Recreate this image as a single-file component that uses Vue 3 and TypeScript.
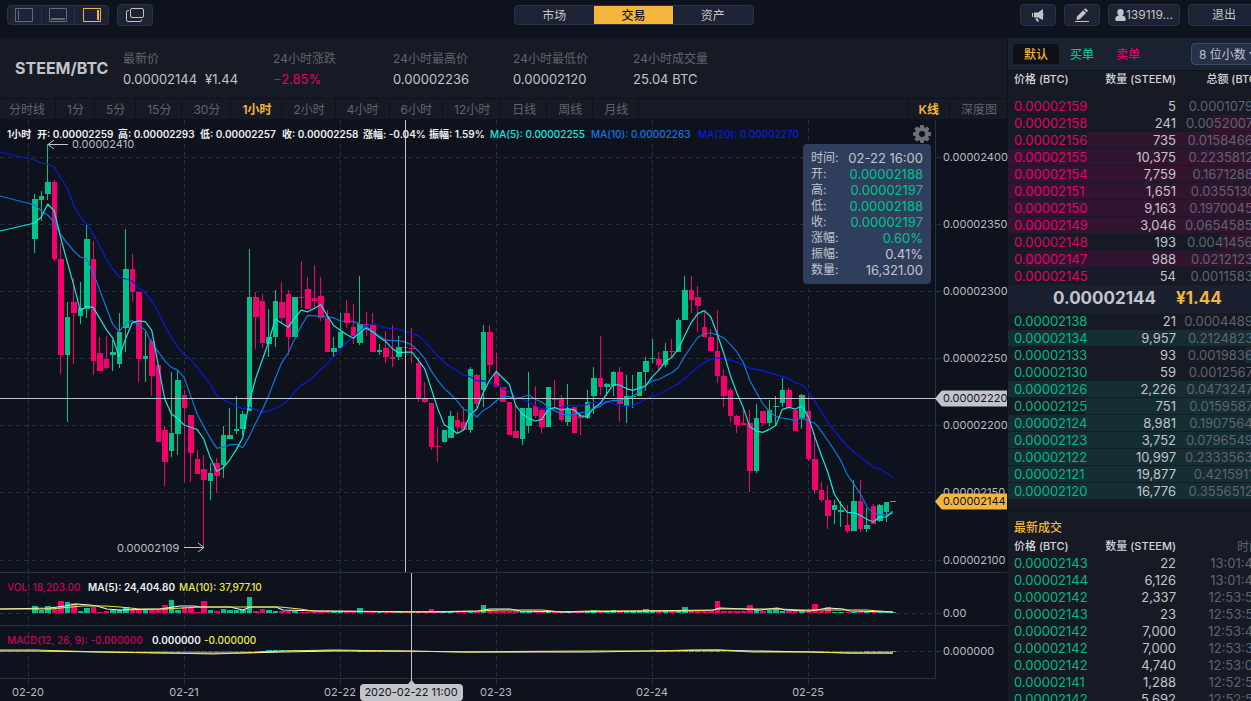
<script setup lang="ts">
import { ref } from 'vue'

type Candle = [dir: 'g' | 'r', high: number, top: number, bottom: number, low: number]
type Point = [number, number]

const navItems = ['市场', '交易', '资产']
const activeNav = ref('交易')

const periods = ['分时线', '1分', '5分', '15分', '30分', '1小时', '2小时', '4小时', '6小时', '12小时', '日线', '周线', '月线']
const activePeriod = ref('1小时')
const views = ['K线', '深度图']
const activeView = ref('K线')

const stats = [
  { label: '24小时涨跌', value: '−2.85%', down: true },
  { label: '24小时最高价', value: '0.00002236', down: false },
  { label: '24小时最低价', value: '0.00002120', down: false },
  { label: '24小时成交量', value: '25.04 BTC', down: false },
]

const sells = [
  ['0.00002159', '5', '0.00010795'],
  ['0.00002158', '241', '0.00520078'],
  ['0.00002156', '735', '0.01584660'],
  ['0.00002155', '10,375', '0.22358125'],
  ['0.00002154', '7,759', '0.16712886'],
  ['0.00002151', '1,651', '0.03551301'],
  ['0.00002150', '9,163', '0.19700450'],
  ['0.00002149', '3,046', '0.06545854'],
  ['0.00002148', '193', '0.00414564'],
  ['0.00002147', '988', '0.02121236'],
  ['0.00002145', '54', '0.00115830'],
]
const buys = [
  ['0.00002138', '21', '0.00044898'],
  ['0.00002134', '9,957', '0.21248238'],
  ['0.00002133', '93', '0.00198369'],
  ['0.00002130', '59', '0.00125670'],
  ['0.00002126', '2,226', '0.04732476'],
  ['0.00002125', '751', '0.01595875'],
  ['0.00002124', '8,981', '0.19075644'],
  ['0.00002123', '3,752', '0.07965496'],
  ['0.00002122', '10,997', '0.23335634'],
  ['0.00002121', '19,877', '0.42159117'],
  ['0.00002120', '16,776', '0.35565120'],
]
const trades = [
  ['0.00002143', '22', '13:01:48'],
  ['0.00002144', '6,126', '13:01:46'],
  ['0.00002142', '2,337', '12:53:58'],
  ['0.00002143', '23', '12:53:52'],
  ['0.00002142', '7,000', '12:53:45'],
  ['0.00002142', '7,000', '12:53:35'],
  ['0.00002142', '4,740', '12:53:02'],
  ['0.00002141', '1,288', '12:52:58'],
  ['0.00002142', '5,692', '12:52:56'],
]
const depth = (total: string) => ({ '--depth': Math.min(100, Number(total) * 4400) + '%' })

const tip = [
  ['时间:', '02-22 16:00', ''],
  ['开:', '0.00002188', 'up'],
  ['高:', '0.00002197', 'up'],
  ['低:', '0.00002188', 'up'],
  ['收:', '0.00002197', 'up'],
  ['涨幅:', '0.60%', 'up'],
  ['振幅:', '0.41%', ''],
  ['数量:', '16,321.00', ''],
]

const candles: Candle[] = [
  ['g', 194, 199, 239, 253], ['g', 191, 196, 200, 221], ['g', 144, 182, 194, 200], ['r', 180, 182, 259, 261],
  ['r', 243, 259, 355, 374], ['g', 302, 317, 355, 422], ['r', 278, 302, 313, 364], ['g', 282, 308, 316, 324],
  ['g', 225, 239, 309, 318], ['r', 241, 259, 361, 375], ['r', 337, 353, 371, 371], ['r', 336, 359, 368, 369],
  ['g', 340, 352, 355, 371], ['g', 313, 332, 364, 368], ['g', 229, 269, 328, 352], ['r', 254, 269, 292, 302],
  ['r', 292, 292, 359, 382], ['g', 330, 356, 359, 382], ['r', 339, 341, 376, 396], ['r', 365, 365, 442, 442],
  ['r', 426, 430, 462, 486], ['g', 372, 433, 451, 457], ['g', 371, 380, 434, 455], ['r', 390, 395, 408, 482],
  ['r', 415, 415, 453, 482], ['r', 450, 459, 474, 474], ['r', 455, 469, 480, 547], ['g', 463, 473, 481, 500],
  ['r', 458, 463, 476, 493], ['g', 426, 435, 465, 478], ['g', 408, 435, 439, 439], ['g', 396, 429, 431, 434],
  ['g', 411, 414, 429, 435], ['g', 249, 297, 411, 411], ['r', 292, 297, 317, 349], ['r', 294, 301, 343, 348],
  ['g', 309, 337, 344, 357], ['g', 290, 301, 337, 347], ['r', 282, 302, 318, 323], ['r', 290, 294, 337, 355],
  ['g', 297, 297, 337, 337], ['r', 261, 297, 298, 308], ['r', 277, 289, 309, 309], ['r', 265, 298, 301, 307],
  ['r', 277, 296, 318, 321], ['r', 310, 318, 352, 352], ['g', 337, 348, 352, 357], ['g', 313, 332, 348, 348],
  ['r', 300, 313, 323, 328], ['r', 304, 327, 336, 344], ['g', 276, 324, 343, 345], ['r', 312, 324, 325, 336],
  ['r', 313, 325, 352, 352], ['g', 344, 350, 352, 355], ['r', 331, 348, 357, 363], ['r', 325, 357, 359, 367],
  ['g', 336, 347, 357, 360], ['r', 347, 347, 348, 348], ['r', 328, 348, 349, 363], ['r', 357, 363, 398, 402],
  ['r', 382, 399, 402, 403], ['r', 403, 403, 447, 450], ['r', 427, 446, 447, 462], ['g', 430, 430, 442, 442],
  ['g', 411, 416, 438, 438], ['r', 412, 420, 427, 433], ['r', 407, 422, 430, 430], ['g', 367, 369, 430, 433],
  ['r', 374, 375, 404, 408], ['g', 325, 332, 390, 407], ['r', 325, 332, 365, 374], ['r', 353, 373, 387, 387],
  ['r', 387, 387, 402, 402], ['r', 402, 402, 435, 435], ['r', 405, 431, 438, 438], ['g', 408, 408, 439, 445],
  ['g', 372, 408, 426, 433], ['r', 386, 406, 416, 418], ['r', 408, 410, 427, 433], ['g', 387, 387, 427, 427],
  ['r', 380, 399, 400, 409], ['r', 395, 399, 420, 422], ['g', 384, 409, 422, 426], ['r', 407, 407, 433, 433],
  ['r', 413, 415, 418, 435], ['g', 390, 402, 418, 419], ['g', 367, 378, 396, 414], ['r', 336, 378, 387, 395],
  ['g', 383, 384, 387, 396], ['g', 371, 372, 386, 396], ['r', 367, 372, 404, 422], ['g', 375, 396, 406, 423],
  ['g', 375, 396, 397, 408], ['g', 372, 372, 396, 396], ['g', 357, 361, 372, 391], ['g', 339, 358, 359, 363],
  ['r', 352, 359, 365, 371], ['g', 343, 351, 365, 367], ['r', 339, 351, 352, 358], ['g', 318, 320, 352, 352],
  ['g', 276, 290, 320, 320], ['r', 276, 290, 300, 313], ['r', 286, 297, 306, 332], ['r', 312, 327, 337, 337],
  ['r', 329, 337, 351, 351], ['r', 310, 351, 376, 383], ['r', 369, 376, 396, 407], ['r', 388, 390, 416, 422],
  ['r', 415, 416, 425, 433], ['r', 409, 423, 425, 425], ['r', 410, 423, 471, 492], ['g', 404, 418, 471, 473],
  ['r', 411, 411, 423, 426], ['g', 400, 410, 423, 426], ['g', 396, 406, 407, 426], ['g', 378, 390, 403, 407],
  ['r', 388, 390, 408, 408], ['r', 409, 410, 431, 431], ['g', 394, 395, 418, 429], ['r', 396, 411, 459, 461],
  ['r', 433, 459, 490, 494], ['r', 482, 490, 500, 502], ['r', 485, 500, 516, 529], ['g', 500, 505, 510, 524],
  ['g', 501, 510, 512, 527], ['r', 505, 525, 531, 533], ['g', 480, 501, 531, 531], ['r', 480, 501, 529, 532],
  ['g', 508, 525, 529, 532], ['r', 504, 506, 524, 524], ['g', 504, 505, 521, 522], ['g', 502, 502, 512, 522],
  ['g', 501, 501, 502, 502],
]

const centre = (i: number) => 34.75 + i * 6.5
const bodies = candles.map(([dir, high, top, bottom, low], i) => ({
  dir, high, top, bottom, low,
  left: Math.round(32 + i * 6.5),
  width: i % 2 ? 5 : 6,
  wick: Math.floor(centre(i)),
}))

const closes = candles.map((c) => (c[0] === 'g' ? c[2] : c[3]))
function average(span: number, edge: number, lead: number[]): string {
  const pts: string[] = [`0,${edge}`]
  closes.forEach((_, i) => {
    const y = i < lead.length ? lead[i] : closes.slice(i - span + 1, i + 1).reduce((a, b) => a + b, 0) / span
    pts.push(`${centre(i)},${y.toFixed(1)}`)
  })
  return pts.join(' ')
}
const ma5 = average(5, 231, [223, 217, 204, 211])
const ma10 = average(10, 196, [205, 211, 215, 222, 235, 243, 251, 257, 259])
const ma20 = average(20, 152, [160, 163, 164, 167, 178, 188, 205, 217, 224, 234, 246, 259, 269, 277, 279, 281, 288, 293, 301])

const volHead = [7, 3, 7, 4, 12, 11, 10, 2, 5, 6, 1, 2, 3, 3, 6, 3, 3, 3, 3, 3, 8, 13, 3, 6, 5, 1, 12, 3, 2, 4, 3, 3, 3, 16, 2, 4, 3, 2, 2, 2]
const volPeaks: Record<number, number> = {
  50: 5, 61: 4, 69: 8, 70: 2, 71: 2, 86: 3, 89: 3, 94: 4, 100: 6, 105: 12, 110: 8, 111: 3, 112: 2, 113: 3, 114: 4, 115: 2, 120: 9, 121: 2, 122: 6,
}
const volume = (i: number) => volHead[i] ?? volPeaks[i] ?? (i > 122 || (i > 40 && i < 69) ? 1 : 2)

const line = (pts: Point[]) => pts.map((p) => p.join(',')).join(' ')
const volYellow = line([[0, 609], [50, 609], [82, 606], [105, 606], [120, 607], [140, 609], [165, 609], [200, 607], [280, 607], [300, 609], [313, 611], [410, 612], [480, 611], [500, 610], [543, 610], [560, 612], [590, 611], [687, 611], [713, 610], [717, 609], [780, 609], [800, 610], [866, 610], [893, 612]])
const volWhite = line([[0, 609], [50, 608], [65, 606], [76, 604], [90, 605], [97, 606], [107, 609], [120, 610], [160, 609], [180, 606], [194, 606], [200, 607], [230, 607], [243, 610], [250, 607], [276, 607], [283, 610], [320, 611], [440, 612], [478, 611], [490, 609], [510, 609], [520, 611], [570, 612], [640, 611], [713, 610], [720, 608], [745, 609], [760, 610], [777, 608], [785, 610], [810, 611], [828, 608], [843, 609], [850, 611], [893, 612]])
const macdYellow = line([[0, 650], [35, 650], [100, 652], [167, 653], [213, 654], [240, 653], [283, 651], [333, 650], [400, 651], [467, 652], [590, 651], [650, 651], [693, 650], [717, 650], [753, 652], [810, 652], [850, 653], [893, 653]])
const macdWhite = line([[0, 651], [35, 651], [100, 652], [167, 653], [200, 653], [240, 653], [283, 652], [333, 651], [400, 651], [467, 652], [590, 652], [650, 651], [717, 650], [753, 651], [810, 652], [850, 653], [893, 653]])
const macdBar = (i: number) => (i >= 9 && i <= 34 ? 'r' : (i > 34 && i < 57) || (i > 95 && i < 106) ? 'g' : (i >= 57 && i < 72) || (i > 105 && i < 128) ? 'r' : i > 127 ? 'g' : '')

const priceTicks: [string, number][] = [
  ['0.00002400', 157], ['0.00002350', 224], ['0.00002300', 291], ['0.00002250', 358],
  ['0.00002200', 425], ['0.00002150', 492], ['0.00002100', 560], ['0.00', 613], ['0.000000', 651],
]
const dateTicks: [string, number][] = [['02-20', 28], ['02-21', 184], ['02-22', 340], ['02-23', 496], ['02-24', 652], ['02-25', 808]]

const priceLegend: [string, number, string][] = [
  ['1小时', 7, 'lit'], ['开: 0.00002259', 37, 'lit'], ['高: 0.00002293', 118, 'lit'], ['低: 0.00002257', 200, 'lit'],
  ['收: 0.00002258', 282, 'lit'], ['涨幅: -0.04%', 363, 'lit'], ['振幅: 1.59%', 429, 'lit'],
  ['MA(5): 0.00002255', 490, 'c5'], ['MA(10): 0.00002263', 591, 'c10'], ['MA(20): 0.00002270', 698, 'c20'],
]
const volLegend: [string, number, string][] = [['VOL: 18,203.00', 7, 'pink'], ['MA(5): 24,404.80', 88, 'lit'], ['MA(10): 37,977.10', 179, 'lemon']]
const macdLegend: [string, number, string][] = [['MACD(12, 26, 9): -0.000000', 7, 'pink'], ['0.000000', 152, 'lit'], ['-0.000000', 204, 'lemon']]
</script>

<template>
  <div class="app">
    <header class="topbar">
      <div class="group">
        <div class="segments">
          <button type="button" aria-label="左侧栏"><svg width="18" height="14"><path d="M.5.5h17v13H.5zM3.500 2v10" /></svg></button>
          <button type="button" aria-label="底栏"><svg width="18" height="14"><path d="M.5.5h17v13H.5z" /><path d="M2 11h14" stroke-width="2" /></svg></button>
          <button type="button" aria-label="右侧栏" class="on"><svg width="18" height="14"><path d="M.5.5h17v13H.5z" /><path d="M15 2v10" stroke-width="2" /></svg></button>
        </div>
        <button type="button" class="btn square" aria-label="新窗口">
          <svg width="18" height="14"><rect x="4.500" y=".5" width="13" height="9" rx="1.500" /><path d="M3 2.500H2A1.500 1.500 0 0 0 .5 4v8A1.500 1.500 0 0 0 2 13.500h12a1.500 1.500 0 0 0 1.500-1.500v-.5" /></svg>
        </button>
      </div>
      <nav class="nav">
        <button v-for="n in navItems" :key="n" type="button" :class="{ on: n === activeNav }" @click="activeNav = n">{{ n }}</button>
      </nav>
      <div class="group end">
        <button type="button" class="btn square" aria-label="公告">
          <svg class="solid" width="14" height="14"><path d="M1 5h1v4H1zM3 4.500h4L12 1v11L7 9.500H3zM4 10.500h3l1 3H6zM12 5.500q1.500 1 0 2z" /></svg>
        </button>
        <button type="button" class="btn square" aria-label="编辑">
          <svg class="solid" width="14" height="14"><path d="M2 8.500 8.200 2.300l2.800 2.800-6.200 6.100L1.500 12zM9 1.500l.8-.8q.7-.6 1.400 0l1.300 1.300q.6.7 0 1.400l-.8.8zM0 13h14v1H0z" /></svg>
        </button>
        <button type="button" class="btn wide">
          <svg class="solid" width="11" height="12"><path d="M5.500 0a3.200 3.200 0 0 1 3.200 3.300c0 1.500-.6 2.600-1.500 3.200 2 .4 3.500 1.300 3.500 3.300 0 1.200-.3 2.200-1 2.200H1.300c-.7 0-1-1-1-2.200 0-2 1.500-2.900 3.500-3.300-.9-.6-1.500-1.700-1.500-3.200A3.200 3.200 0 0 1 5.500 0z" /></svg>
          <span>139119...</span>
        </button>
        <button type="button" class="btn wide">退出</button>
      </div>
    </header>

    <div class="body">
      <main class="market">
        <section class="summary">
          <h1>STEEM/BTC</h1>
          <dl class="latest"><dt>最新价</dt><dd><span>0.00002144</span><span>¥1.44</span></dd></dl>
          <dl v-for="s in stats" :key="s.label"><dt>{{ s.label }}</dt><dd :class="{ down: s.down }">{{ s.value }}</dd></dl>
        </section>
        <div class="tabs">
          <button v-for="p in periods" :key="p" type="button" :class="{ on: p === activePeriod }" @click="activePeriod = p">{{ p }}</button>
          <span class="fill"></span>
          <button v-for="v in views" :key="v" type="button" :class="{ on: v === activeView }" @click="activeView = v">{{ v }}</button>
        </div>

        <section class="chart">
          <svg class="plot" viewBox="0 120 1008 581" role="img" aria-label="STEEM/BTC K线图">
            <g class="grid">
              <path v-for="[label, y] in priceTicks" :key="label" :d="`M0 ${y + 0.5}H935`" />
              <path v-for="[label, x] in dateTicks" :key="label" :d="`M${x + 0.5} 120V678`" />
            </g>
            <g class="frame">
              <path d="M935.500 120V679M0 572.500H1007M0 625.500H1007M0 678.500H936" />
              <path v-for="[label, y] in priceTicks" :key="label" :d="`M936 ${y + 0.5}h5`" />
              <path v-for="[label, x] in dateTicks" :key="label" :d="`M${x + 0.5} 679v5`" />
            </g>

            <g shape-rendering="crispEdges">
              <g v-for="(b, i) in bodies" :key="i" :class="b.dir">
                <rect :x="b.wick" :y="b.high" width="1" :height="b.low - b.high" />
                <rect :x="b.left" :y="b.top" :width="b.width" :height="b.bottom - b.top" />
                <rect :x="b.left" :y="613 - volume(i)" :width="b.width" :height="volume(i)" />
                <rect v-if="macdBar(i)" :class="macdBar(i)" :x="b.left" :y="i > 35 && i < 50 ? 650 : 651" :width="b.width" height="1" />
              </g>
            </g>

            <polyline class="ma20" :points="ma20" />
            <polyline class="ma10" :points="ma10" />
            <polyline class="ma5" :points="ma5" />
            <polyline class="white" :points="volWhite" />
            <polyline class="yellow" :points="volYellow" />
            <polyline class="white" :points="macdWhite" />
            <polyline class="yellow" :points="macdYellow" />

            <g class="note">
              <path d="M68 144.500H48M54 140l-6 4.500 6 4.500M184 547.500h20M198 543l6 4.500-6 4.500" />
              <text x="72" y="148">0.00002410</text>
              <text x="117" y="552">0.00002109</text>
            </g>

            <path class="cross" d="M0 398.500H936M405.500 120V572M411.500 573V684" />

            <g class="scale">
              <text v-for="[label, y] in priceTicks" :key="label" x="943" :y="y + 4">{{ label }}</text>
              <text v-for="[label, x] in dateTicks" :key="label" :x="x" y="696" text-anchor="middle">{{ label }}</text>
            </g>
            <g class="marker">
              <path d="M935 398.500l5-6q1-2 3-2h64v16h-64q-2 0-3-2z" />
              <text x="943" y="402">0.00002220</text>
              <path class="gold" d="M935 501.500l5-6q1-2 3-2h64v16h-64q-2 0-3-2z" />
              <text x="943" y="505">0.00002144</text>
              <path d="M364 684h44l3.500-4 3.500 4h44q4 0 4 4v9q0 4-4 4h-95q-4 0-4-4v-9q0-4 4-4z" />
              <text x="411" y="696" text-anchor="middle">2020-02-22 11:00</text>
            </g>

            <g class="legend">
              <text v-for="[label, x, tone] in priceLegend" :key="label" :class="tone" :x="x" y="138">{{ label }}</text>
              <text v-for="[label, x, tone] in volLegend" :key="label" :class="tone" :x="x" y="591">{{ label }}</text>
              <text v-for="[label, x, tone] in macdLegend" :key="label" :class="tone" :x="x" y="644">{{ label }}</text>
            </g>
          </svg>

          <button type="button" class="gear" aria-label="设置">
            <svg width="18" height="18" viewBox="-9 -9 18 18">
              <g><rect v-for="a in 8" :key="a" x="-2" y="-9" width="4" height="5" rx="1" :transform="`rotate(${a * 45})`" /></g>
              <circle r="5" fill="none" stroke-width="4" />
            </svg>
          </button>
          <dl class="tip">
            <div v-for="[k, v, tone] in tip" :key="k"><dt>{{ k }}</dt><dd :class="tone">{{ v }}</dd></div>
          </dl>
        </section>
      </main>

      <aside class="book">
        <div class="filters">
          <button type="button" class="on">默认</button>
          <button type="button" class="buy">买单</button>
          <button type="button" class="sell">卖单</button>
          <div class="picker">
            <select aria-label="小数位数"><option>8 位小数</option></select>
            <svg width="8" height="5"><path d="M0 0h8L4 5z" /></svg>
          </div>
        </div>
        <table class="sells">
          <thead><tr><th>价格 (BTC)</th><th>数量 (STEEM)</th><th>总额 (BTC)</th></tr></thead>
          <tbody>
            <tr v-for="r in sells" :key="r[0]" :style="depth(r[2])"><td>{{ r[0] }}</td><td>{{ r[1] }}</td><td>{{ r[2] }}</td></tr>
          </tbody>
        </table>
        <div class="last"><strong>0.00002144</strong><strong class="cny">¥1.44</strong></div>
        <table class="buys" aria-label="买单">
          <tbody>
            <tr v-for="r in buys" :key="r[0]" :style="depth(r[2])"><td>{{ r[0] }}</td><td>{{ r[1] }}</td><td>{{ r[2] }}</td></tr>
          </tbody>
        </table>
        <section class="recent">
          <h2>最新成交</h2>
          <table class="trades">
            <thead><tr><th>价格 (BTC)</th><th>数量 (STEEM)</th><th>时间</th></tr></thead>
            <tbody>
              <tr v-for="(r, i) in trades" :key="i"><td>{{ r[0] }}</td><td>{{ r[1] }}</td><td>{{ r[2] }}</td></tr>
            </tbody>
          </table>
        </section>
      </aside>
    </div>
  </div>
</template>

<style>
html, body { margin: 0; background: #0e121c; overflow: hidden; }
</style>

<style scoped>
.app {
  display: flex;
  flex-direction: column;
  min-width: 1268px;
  height: 100vh;
  overflow: hidden;
  background: #0e121c;
  color: #c3c4c9;
  font: 12px/16px Inter, "Noto Sans CJK SC", sans-serif;
}
button, select { font: inherit; color: inherit; background: none; border: 0; padding: 0; margin: 0; cursor: pointer; }
h1, h2, dl, dd { margin: 0; }

.topbar { display: grid; grid-template-columns: 1fr auto 1fr; align-items: start; flex: none; height: 38px; padding: 0 8px 0 7px; }
.group { display: flex; gap: 8px; padding-top: 4px; align-items: center; }
.group.end { justify-content: flex-end; }
.segments, .nav { display: flex; box-sizing: border-box; height: 20px; border: 1px solid #27324a; border-radius: 4px; background: #1d2334; overflow: hidden; }
.segments { width: 102px; }
.segments button { display: flex; flex: 1; align-items: center; justify-content: center; }
.segments button + button { border-left: 1px solid #27324a; }
.segments svg { fill: none; stroke: #666a74; }
.segments .on svg { stroke: #f4b53f; }
.nav { margin-top: 5px; width: 240px; }
.nav button { flex: 1; line-height: 20px; }
.nav .on { background: #f4b53f; color: #14161e; font-weight: 500; }
.btn { display: flex; align-items: center; justify-content: center; box-sizing: border-box; height: 22px; border: 1px solid #27324a; border-radius: 4px; background: #1d2334; }
.btn svg { fill: none; stroke: #c3c4c9; flex: none; }
.btn .solid { fill: #c3c4c9; stroke: none; }
.square { width: 36px; }
.wide { width: 72px; line-height: 20px; }

.body { display: flex; flex: 1; min-height: 0; }
.market { flex: 1; min-width: 0; }
.summary { display: flex; align-items: center; box-sizing: border-box; height: 60px; padding-left: 15px; margin-right: 1px; background: #161a24; }
.summary h1 { width: 108px; font-size: 16px; line-height: 20px; }
.summary dl { width: 120px; padding-top: 2px; }
.summary .latest { width: 150px; }
.summary dt { color: #60646e; line-height: 20px; }
.summary dd { line-height: 20px; font-size: 13px; }
.latest dd { display: flex; gap: 8px; }
.down { color: #e5006a; }

.tabs { display: flex; height: 20px; margin: 1px 1px 1px 0; background: #161a24; color: #60646e; }
.tabs button { padding: 2px 10px 0 11px; line-height: 18px; border-right: 1px solid #0e121c; }
.tabs button:first-child { padding-left: 9px; }
.tabs .on { color: #f4b53f; font-weight: 600; }
.tabs .fill { flex: 1; border-right: 1px solid #0e121c; }
.tabs button:last-child { border-right: 0; }

.chart { position: relative; }
.plot { display: block; width: 100%; height: auto; font-size: 11px; }
.grid path { stroke: #263044; stroke-dasharray: 4 4; }
.frame path { stroke: #263044; }
.g { fill: #00c38c; }
.r { fill: #f5006d; }
polyline { fill: none; stroke-width: 1.2; stroke-linejoin: round; }
.ma5 { stroke: #12e8e0; }
.ma10 { stroke: #0b78e0; }
.ma20 { stroke: #0a1bde; }
.white { stroke: #f2f2f2; }
.yellow { stroke: #ece64e; }
.note path { fill: none; stroke: #c3c4c9; }
.note text, .scale text { fill: #b9bbc2; }
.cross { stroke: #c3c4c9; }
.marker path { fill: #c3c4c9; }
.marker .gold { fill: #f4b53f; }
.marker text { fill: #10141e; }
.legend text { fill: #f0f0f2; font-size: 10px; font-weight: 500; }
.legend .lit { font-weight: 600; }
.legend .c5 { fill: #12e8e0; }
.legend .c10 { fill: #0b78e0; }
.legend .c20 { fill: #0a1bde; }
.legend .pink { fill: #c8005c; }
.legend .lemon { fill: #ece64e; }

.gear { position: absolute; top: 5px; right: 77px; width: 18px; height: 18px; line-height: 0; }
.gear svg { fill: #6d7077; stroke: #6d7077; stroke-width: 0; }
.tip { position: absolute; top: 24px; right: 77px; box-sizing: border-box; width: 128px; padding: 6px 8px; border-radius: 4px; background: rgba(51, 65, 98, .95); }
.tip div { display: flex; justify-content: space-between; }
.tip dd { font-size: 13px; }
.up { color: #00c38c; }

.book { flex: none; width: 260px; overflow: hidden; background: #151a24; }
.filters { display: flex; align-items: center; box-sizing: border-box; height: 33px; padding: 0 8px 0 5px; background: #1a2130; border-bottom: 1px solid #0e121c; }
.filters > button { width: 46px; height: 20px; padding-top: 2px; line-height: 18px; border-radius: 3px; font-weight: 500; }
.filters .on { background: #0d1017; color: #f4b53f; }
.filters .buy { color: #00c38c; }
.filters .sell { color: #e5006a; }
.picker { position: relative; margin-left: auto; }
.picker select { box-sizing: border-box; width: 69px; height: 22px; padding: 1px 0 0 7px; border: 1px solid #3a4a70; border-radius: 4px; background: #27314a; appearance: none; }
.picker svg { position: absolute; right: 3px; top: 9px; fill: #c3c4c9; pointer-events: none; }

table { width: 100%; border-collapse: collapse; table-layout: fixed; }
th, td { padding: 0; text-align: right; font-weight: 400; white-space: nowrap; }
th:first-child, td:first-child { width: 80px; padding-left: 6px; text-align: left; box-sizing: border-box; }
th:nth-child(2), td:nth-child(2) { width: 88px; }
th:last-child, td:last-child { padding-right: 7px; }
tr { height: 17px; }
td { font-size: 13px; line-height: 17px; }
th { font-size: 11px; font-weight: 500; color: #d5d6da; line-height: 17px; }
td:last-child { color: #60646e; }
.sells thead tr { height: 27px; }
.sells th { vertical-align: top; }
.sells td:first-child { color: #e5006a; }
.buys td:first-child, .trades td:first-child { color: #00b985; }
.sells tbody tr { background: linear-gradient(#311530, #311530) right top / var(--depth) 16px no-repeat; }
.buys tr { background: linear-gradient(#142e34, #142e34) right top / var(--depth) 16px no-repeat; }
.last { display: flex; align-items: center; gap: 20px; box-sizing: border-box; height: 28px; padding: 0 0 2px 45px; background: #1a2030; font-size: 17px; line-height: 20px; }
.cny { color: #f4b53f; }
.recent { margin-top: 10px; padding-top: 8px; border-top: 1px solid #0e121c; }
.recent h2 { margin-bottom: 1px; padding-left: 6px; font-size: 12px; line-height: 18px; font-weight: 500; color: #f4b53f; }
.trades th:last-child { font-size: 12px; font-weight: 400; color: #60646e; }
</style>
